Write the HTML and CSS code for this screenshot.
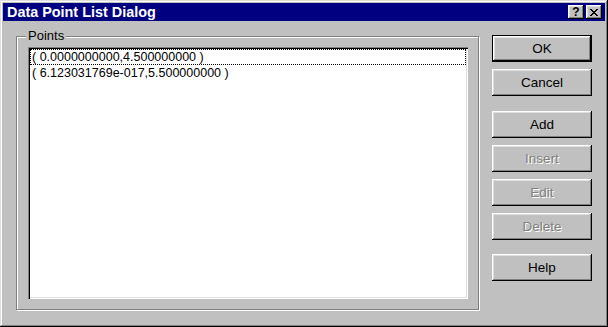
FILE: index.html
```html
<!DOCTYPE html>
<html lang="en">
<head>
    <meta charset="UTF-8">
    <link rel="stylesheet" href="styles.css">
    <title>Data Point List Dialog</title>
</head>
<body>
    <div class="window">
        <div class="titlebar">
            <span class="title">Data Point List Dialog</span>
            <div class="caption-buttons">
                <button class="cap-btn help-cap">?</button>
                <button class="cap-btn">
                    <svg width="8" height="7" viewBox="0 0 8 7" shape-rendering="crispEdges">
                        <path d="M0 0h2v1H0z M6 0h2v1H6z M1 1h2v1H1z M5 1h2v1H5z M2 2h4v1H2z M3 3h2v1H3z M2 4h4v1H2z M1 5h2v1H1z M5 5h2v1H5z M0 6h2v1H0z M6 6h2v1H6z" fill="#000"/>
                    </svg>
                </button>
            </div>
        </div>
        <div class="dialog-body">
            <fieldset class="group">
                <legend>Points</legend>
                <div class="listbox">
                    <div class="item focused">( 0.0000000000,4.500000000 )</div>
                    <div class="item">( 6.123031769e-017,5.500000000 )</div>
                </div>
            </fieldset>
            <div class="buttons">
                <button class="btn default">OK</button>
                <button class="btn">Cancel</button>
                <button class="btn spaced">Add</button>
                <button class="btn" disabled>Insert</button>
                <button class="btn" disabled>Edit</button>
                <button class="btn" disabled>Delete</button>
                <button class="btn spaced-help">Help</button>
            </div>
        </div>
    </div>
</body>
</html>
```
FILE: styles.css
```css
*
{
    box-sizing: border-box;
}
body{margin:0;background:#c0c0c0;font-family:"Liberation Sans",Arial,sans-serif;}
.window{width:608px;height:327px;padding:3px;background:#c0c0c0;display:flex;flex-direction:column;
    box-shadow:inset -1px -1px #000,inset 1px 1px #dfdfdf,inset -2px -2px #808080,inset 2px 2px #fff;}
.titlebar{height:18px;background:#000080;color:#fff;display:flex;align-items:center;justify-content:space-between;padding:0 3px 0 4px;}
.title{font-weight:bold;font-size:14.4px;}
.caption-buttons{display:flex;gap:2px;}
.cap-btn{width:16px;height:14px;padding:0;border:0;background:#c0c0c0;color:#000;display:flex;align-items:center;justify-content:center;
    box-shadow:inset -1px -1px #000,inset 1px 1px #fff,inset -2px -2px #808080,inset 2px 2px #dfdfdf;}
.help-cap{font:bold 12px "Liberation Sans",Arial,sans-serif;padding-bottom:1px;}

.dialog-body{flex:1;display:flex;gap:13px;padding:8px 13px 14px 13px;}
.group{flex:1;margin:0;padding:4px 10px 10px 11px;border:1px solid #808080;display:flex;flex-direction:column;min-width:0;
    box-shadow:inset 1px 1px #fff,1px 1px #fff;}
.group legend{font-size:13px;line-height:14px;padding:0 2px;margin-left:-2px;background:#c0c0c0;}
.listbox{flex:1;background:#fff;padding:2px;
    box-shadow:inset 1px 1px #808080,inset 2px 2px #000,inset -1px -1px #fff,inset -2px -2px #dfdfdf;}
.item{height:16px;line-height:16px;font-size:12.5px;padding-left:2px;white-space:nowrap;}
.item.focused{outline:1px dotted #000;outline-offset:-1px;}

.buttons{width:100px;display:flex;flex-direction:column;gap:7px;margin-top:6px;}
.btn{height:27px;width:100px;padding:0;border:0;background:#c0c0c0;color:#000;font-family:"Liberation Sans",Arial,sans-serif;font-size:13.5px;font-weight:normal;
    box-shadow:inset -1px -1px #000,inset 1px 1px #fff,inset -2px -2px #808080,inset 2px 2px #dfdfdf;}
.btn.default{box-shadow:inset 0 0 0 1px #000,inset -2px -2px #000,inset 2px 2px #fff,inset -3px -3px #808080,inset 3px 3px #dfdfdf;}
.btn:disabled{color:#808080;text-shadow:1px 1px 0 #fff;}
.btn.spaced{margin-top:8px;}
.btn.spaced-help{margin-top:7px;}
```
